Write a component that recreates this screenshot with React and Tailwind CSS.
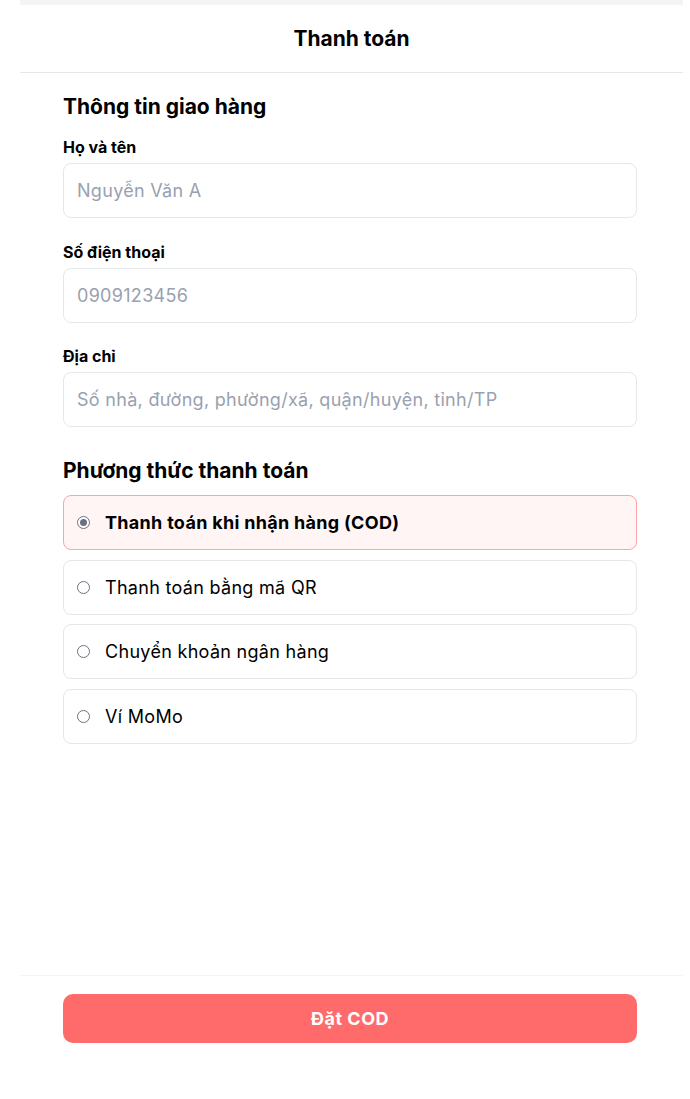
import React, { useState } from 'react';

const methods = [
  { id: 'cod', label: 'Thanh toán khi nhận hàng (COD)', short: 'COD' },
  { id: 'qr', label: 'Thanh toán bằng mã QR', short: 'QR' },
  { id: 'bank', label: 'Chuyển khoản ngân hàng', short: 'chuyển khoản' },
  { id: 'momo', label: 'Ví MoMo', short: 'MoMo' },
];

function Field({ label, placeholder, mt }) {
  return (
    <div className={mt}>
      <label className="block text-[16px] leading-5 font-bold text-black mb-[6px]">{label}</label>
      <input
        type="text"
        placeholder={placeholder}
        className="w-full h-[55px] px-[13px] rounded-lg border border-gray-200 bg-white text-[18px] tracking-[0.3px] text-gray-900 placeholder:text-gray-400 focus:outline-none"
      />
    </div>
  );
}

export default function App() {
  const [method, setMethod] = useState('cod');
  const current = methods.find((m) => m.id === method);

  return (
    <div className="min-h-screen bg-white" style={{ fontFamily: 'Inter, "Noto Sans", sans-serif' }}>
      <div className="ml-5 w-[663px] h-[1099px] flex flex-col bg-white">
        <div className="h-[5px] bg-gray-100"></div>
        <div className="h-[68px] flex items-center justify-center border-b border-gray-200">
          <h1 className="text-[21px] font-bold text-black">Thanh toán</h1>
        </div>

        <div className="flex-1 w-[574px] ml-[43px] pt-5">
          <h2 className="text-[21px] leading-7 font-bold text-black mb-4">Thông tin giao hàng</h2>
          <Field label="Họ và tên" placeholder="Nguyễn Văn A" />
          <Field label="Số điện thoại" placeholder="0909123456" mt="mt-[24px]" />
          <Field label="Địa chỉ" placeholder="Số nhà, đường, phường/xã, quận/huyện, tỉnh/TP" mt="mt-[23px]" />

          <h2 className="mt-[30px] text-[21px] leading-7 font-bold text-black mb-[10px]">Phương thức thanh toán</h2>
          <div className="flex flex-col gap-[9.5px]">
            {methods.map((m) => {
              const active = m.id === method;
              return (
                <button
                  key={m.id}
                  onClick={() => setMethod(m.id)}
                  className={`h-[55px] w-full flex items-center gap-[15px] px-[13px] rounded-lg border text-left ${
                    active ? 'bg-[#fff5f5] border-[#fca5a5]' : 'bg-white border-gray-200'
                  }`}
                >
                  <span className="w-[13px] h-[13px] rounded-full border border-gray-500 flex items-center justify-center bg-white">
                    {active && <span className="w-[7px] h-[7px] rounded-full bg-gray-500"></span>}
                  </span>
                  <span className={`text-[18px] tracking-[0.3px] text-black ${active ? 'font-bold' : 'font-normal'}`}>
                    {m.label}
                  </span>
                </button>
              );
            })}
          </div>
        </div>

        <div className="border-t border-gray-100 pt-[18px] pb-[56px]">
          <button className="block w-[574px] ml-[43px] h-[49px] rounded-[10px] bg-[#ff6b6b] text-white text-[18px] tracking-[0.5px] font-bold">
            Đặt {current.short}
          </button>
        </div>
      </div>
    </div>
  );
}
